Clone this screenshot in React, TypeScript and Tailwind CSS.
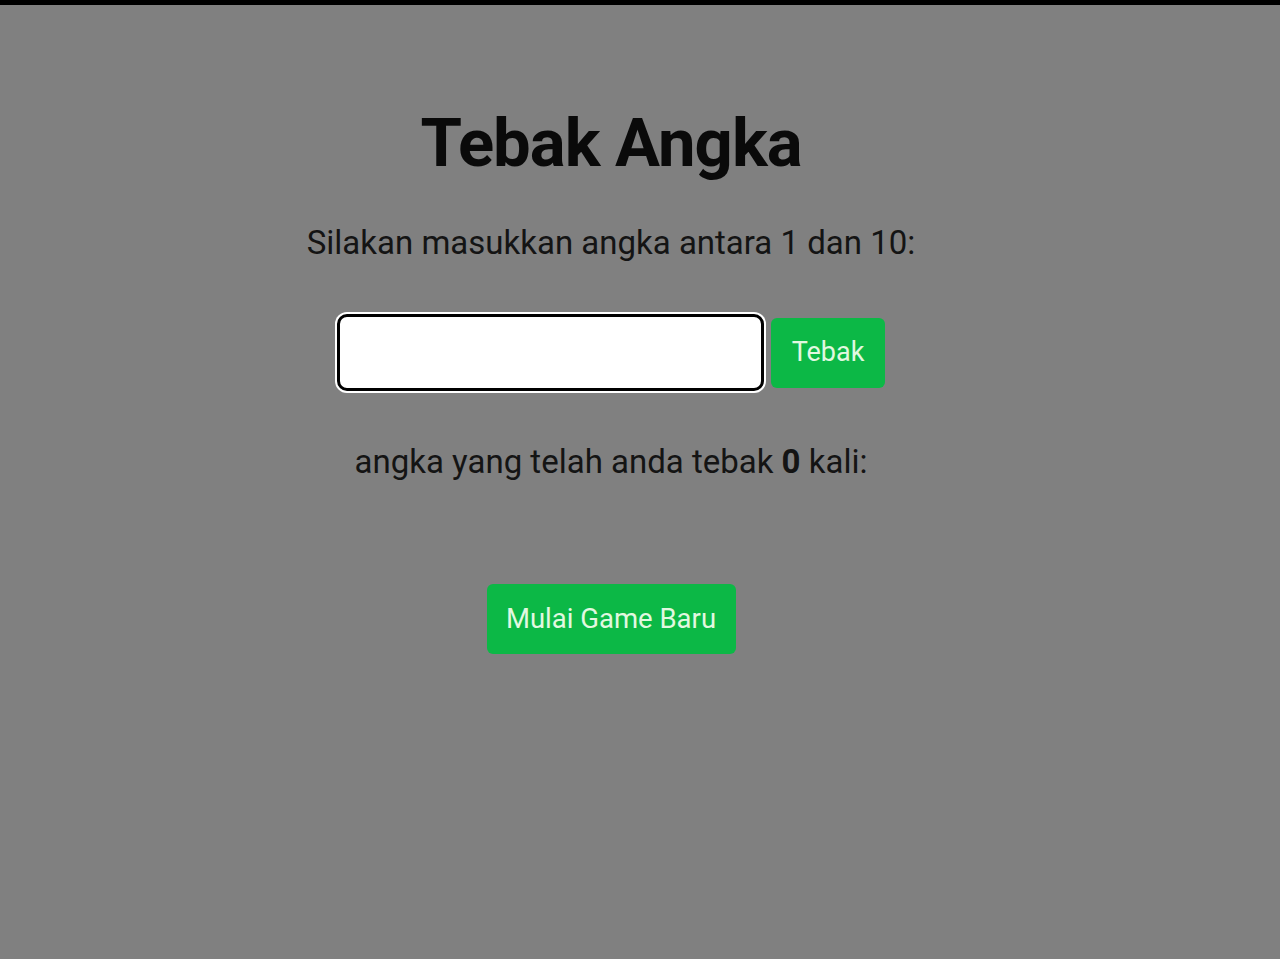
import { useState } from "react";

export default function App() {
  const [guess, setGuess] = useState("");
  const [count] = useState(0);

  return (
    <div className="min-h-[959px] bg-[#808080] border-t-[5px] border-black font-['Roboto',sans-serif] text-[#111]">
      <div className="flex flex-col items-center pt-[99px] pr-[58px]">
        <h1 className="text-[67px] font-bold leading-[78px] tracking-[-1px] text-[#0a0a0a]">Tebak Angka</h1>

        <p className="mt-[41px] text-[33px] leading-[40px] text-[#141414]">
          Silakan masukkan angka antara 1 dan 10:
        </p>

        <div className="mt-[51px] flex items-center gap-[7px]">
          <input
            value={guess}
            onChange={e => setGuess(e.target.value)}
            className="h-[77px] w-[427px] rounded-[10px] border-[3px] border-black bg-white outline-none ring-2 ring-white"
          />
          <button className="h-[70px] w-[114px] rounded-[6px] bg-[#0cb846] text-[27px] text-[#e2f8e0]">
            Tebak
          </button>
        </div>

        <p className="mt-[51px] text-[33px] leading-[40px] text-[#141414]">
          angka yang telah anda tebak <span className="font-bold">{count}</span> kali:
        </p>

        <button className="mt-[102px] h-[70px] w-[249px] rounded-[6px] bg-[#0cb846] text-[27.5px] text-[#e2f8e0]">
          Mulai Game Baru
        </button>
      </div>
    </div>
  );
}
